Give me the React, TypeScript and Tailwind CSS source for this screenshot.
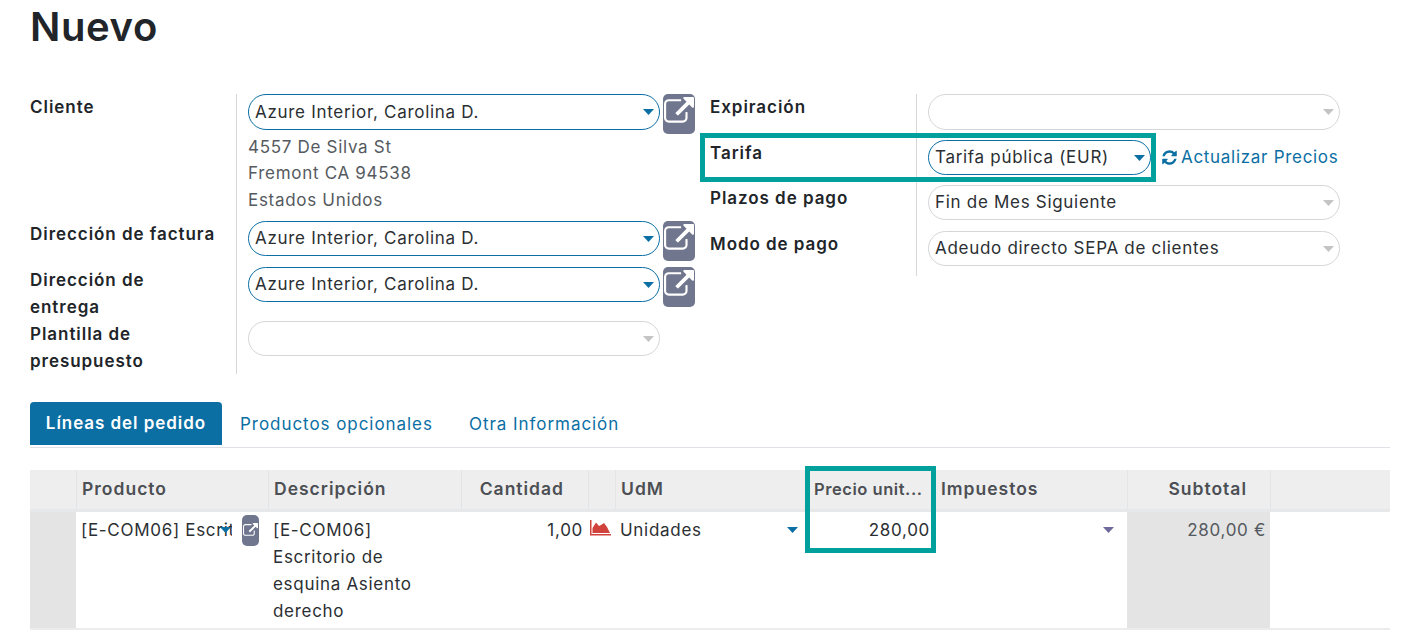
const EXT = "M1408 928v320q0 119-84.5 203.5t-203.5 84.5h-832q-119 0-203.5-84.5t-84.5-203.5v-832q0-119 84.5-203.5t203.5-84.5h704q14 0 23 9t9 23v64q0 14-9 23t-23 9h-704q-66 0-113 47t-47 113v832q0 66 47 113t113 47h832q66 0 113-47t47-113v-320q0-14 9-23t23-9h64q14 0 23 9t9 23zm384-864v512q0 26-19 45t-45 19-45-19l-176-176-652 652q-10 10-23 10t-23-10l-114-114q-10-10-10-23t10-23l652-652-176-176q-19-19-19-45t19-45 45-19h512q26 0 45 19t19 45z";
const REFRESH = "M1639 1056q0 5-1 7-64 268-268 434.5t-478 166.5q-146 0-282.5-55t-243.5-157l-129 129q-19 19-45 19t-45-19-19-45v-448q0-26 19-45t45-19h448q26 0 45 19t19 45-19 45l-137 137q71 66 161 102t187 36q134 0 250-65t186-179q11-17 53-117 8-23 30-23h192q13 0 22.5 9.5t9.5 22.5zm25-800v448q0 26-19 45t-45 19h-448q-26 0-45-19t-19-45 19-45l138-138q-148-137-349-137-134 0-250 65t-186 179q-11 17-53 117-8 23-30 23h-199q-13 0-22.5-9.5t-9.5-22.5v-7q65-268 270-434.5t480-166.5q146 0 284 55.5t245 156.5l130-129q19-19 45-19t45 19 19 45z";

function Caret({ color }: { color: string }) {
  return (
    <svg width="11" height="6" viewBox="0 0 11 6" className="shrink-0">
      <path d="M0 0h11L5.500 6z" fill={color} />
    </svg>
  );
}

function Select({ value, active = false, narrow = false, tall = false }: { value?: string; active?: boolean; narrow?: boolean; tall?: boolean }) {
  return (
    <div
      className={`flex items-center justify-between rounded-[18px] border pl-[6px] pr-[5px] bg-white shrink-0 ${tall ? "h-[36px]" : "h-[35px]"} ${narrow ? "w-[223px]" : "w-[412px]"} ${active ? "border-[#0b6fa4]" : "border-[#d6d6d6]"}`}
    >
      <span className="text-[#2b2f33] whitespace-nowrap">{value}</span>
      <Caret color={active ? "#0b6fa4" : "#c4c4c4"} />
    </div>
  );
}

function ExtButton() {
  return (
    <div className="flex justify-center pt-[3px] w-[32px] h-[40px] ml-[3px] rounded-[5px] bg-[#71768f] shrink-0">
      <svg width="30" height="30" viewBox="0 0 1792 1792" fill="#fff">
        <path d={EXT} />
      </svg>
    </div>
  );
}

function Field({ label, h, children, w }: { label: React.ReactNode; h: string; children: React.ReactNode; w: string }) {
  return (
    <div className={`flex ${h}`}>
      <div className={`${w} shrink-0 font-semibold text-[#212529] tracking-[0.95px] pr-1`}>{label}</div>
      <div className="flex-1 border-l border-[#d8d8d8] pl-[11px] flex items-start">{children}</div>
    </div>
  );
}

function Head({ children, right = false, border = true, pad = "" }: { children?: React.ReactNode; right?: boolean; border?: boolean; pad?: string }) {
  return (
    <div
      className={`h-[39px] flex items-center font-semibold text-[#4c4f54] pl-[5px] whitespace-nowrap text-[17.500px] tracking-[1px] ${pad} ${right ? "justify-end" : ""} ${border ? "border-l border-[#e2e4e6]" : ""}`}
    >
      {children}
    </div>
  );
}

export default function App() {
  return (
    <div
      className="relative w-[1416px] h-[634px] overflow-hidden bg-white text-[17px] leading-[26.500px] tracking-[0.7px] text-[#2b2f33]"
      style={{ fontFamily: '"Inter", "Noto Sans", sans-serif' }}
    >
      <div className="pl-[30px] pr-[26px]">
        <h1 className="h-[94px] pt-[3px] text-[40px] leading-[48px] font-semibold text-[#212529] tracking-[0.6px]">Nuevo</h1>

        <div className="flex h-[308px]">
          <div className="w-[665px] shrink-0 flex flex-col">
            <Field w="w-[206px]" h="h-[127px]" label="Cliente">
              <div className="flex flex-col">
                <div className="flex">
                  <Select value="Azure Interior, Carolina D." active tall />
                  <ExtButton />
                </div>
                <div className="text-[#555a60]">
                  <div className="h-[26px]">4557 De Silva St</div>
                  <div className="h-[27px]">Fremont CA 94538</div>
                  <div className="h-[27px]">Estados Unidos</div>
                </div>
              </div>
            </Field>
            <Field w="w-[206px]" h="h-[46px]" label="Dirección de factura">
              <Select value="Azure Interior, Carolina D." active />
              <ExtButton />
            </Field>
            <Field w="w-[206px]" h="h-[54px]" label={<>Dirección de<br />entrega</>}>
              <Select value="Azure Interior, Carolina D." active />
              <ExtButton />
            </Field>
            <Field w="w-[206px]" h="h-[53px]" label={<>Plantilla de<br />presupuesto</>}>
              <Select />
            </Field>
          </div>
          <div className="ml-[15px] w-[630px] shrink-0 flex flex-col">
            <Field w="w-[206px]" h="h-[46px]" label="Expiración">
              <Select tall />
            </Field>
            <Field w="w-[206px]" h="h-[45px]" label="Tarifa">
              <div className="flex items-center h-[35px]">
                <Select value="Tarifa pública (EUR)" active narrow />
                <div className="flex items-center gap-[3px] ml-[12px] text-[#0b6fa4] whitespace-nowrap">
                  <svg width="17" height="17" viewBox="0 0 1792 1792" fill="#0b6fa4" className="ml-[-2px]">
                    <path d={REFRESH} />
                  </svg>
                  Actualizar Precios
                </div>
              </div>
            </Field>
            <Field w="w-[206px]" h="h-[46px]" label="Plazos de pago">
              <Select value="Fin de Mes Siguiente" />
            </Field>
            <Field w="w-[206px]" h="h-[45px]" label="Modo de pago">
              <Select value="Adeudo directo SEPA de clientes" />
            </Field>
          </div>
        </div>

        <div className="flex h-[46px] border-b border-[#dee2e6] text-[#0b6fa4] tracking-[0.95px]">
          <div className="flex items-center justify-center w-[192px] h-[43px] bg-[#0b6fa4] text-white font-semibold rounded-t-[4px]">Líneas del pedido</div>
          <div className="flex items-center h-[44px] pl-[18px] w-[229px]">Productos opcionales</div>
          <div className="flex items-center h-[44px] pl-[18px]">Otra Información</div>
        </div>

        <div className="mt-[22px] grid grid-cols-[46px_192px_193px_127px_27px_191px_130px_191px_143px_120px] w-[1360px]">
          <div className="col-span-10 grid grid-cols-subgrid bg-[#eeeeee] border-b-[3px] border-[#e6e8ea]">
            <Head border={false} />
            <Head>Producto</Head>
            <Head>Descripción</Head>
            <Head right pad="pr-[24px]">Cantidad</Head>
            <Head />
            <Head>UdM</Head>
            <Head border={false}>
              <span className="pl-[3px] text-[16.500px] tracking-[0.55px]">Precio unit...</span>
            </Head>
            <Head border={false}>Impuestos</Head>
            <Head right pad="pr-[23px]">Subtotal</Head>
            <Head />
          </div>

          <div className="col-span-10 grid grid-cols-subgrid h-[118px] border-b-2 border-[#ececec]">
            <div className="bg-[#e4e4e4]" />
            <div className="flex items-start pl-[5px] pt-[5px] relative">
              <div className="w-[151px] overflow-hidden whitespace-nowrap">[E-COM06] Escritorio</div>
              <div className="absolute left-[144px] top-[15px]">
                <Caret color="#0b6fa4" />
              </div>
              <div className="ml-[10px] mt-[-2px] flex items-center justify-center w-[17px] h-[31px] rounded-[5px] bg-[#71768f]">
                <svg width="15" height="15" viewBox="0 0 1792 1792" fill="#fff">
                  <path d={EXT} />
                </svg>
              </div>
            </div>
            <div className="pl-[5px] pt-[5px] leading-[27px]">
              [E-COM06]<br />Escritorio de<br />esquina Asiento<br />derecho
            </div>
            <div className="text-right pt-[5px] pr-[5px]">1,00</div>
            <div className="pt-[8px] pl-[2px]">
              <svg width="21" height="16" viewBox="0 0 21 16">
                <path d="M0 0h1.500v14H21v1.500H0z" fill="#d0423b" />
                <path d="M2.500 13V8L6 2.500 9 6l2-1 3-2 3 4 3 6z" fill="#d0423b" />
              </svg>
            </div>
            <div className="flex justify-between pl-[5px] pr-[8px] pt-[5px]">
              <span>Unidades</span>
              <div className="pt-[10px]"><Caret color="#0b6fa4" /></div>
            </div>
            <div className="text-right pt-[5px] pr-[6px]">280,00</div>
            <div className="flex justify-end pr-[13px] pt-[15px]">
              <div><Caret color="#6f6a9b" /></div>
            </div>
            <div className="bg-[#e4e4e4] text-right pt-[5px] pr-[4px] text-[#555a60]">280,00 €</div>
            <div />
          </div>
        </div>
      </div>

      <div className="absolute left-[700px] top-[133px] w-[456px] h-[49px] border-[5px] border-[#00a09d] pointer-events-none" />
      <div className="absolute left-[805px] top-[466px] w-[131px] h-[87px] border-[5px] border-[#00a09d] pointer-events-none" />
    </div>
  );
}
